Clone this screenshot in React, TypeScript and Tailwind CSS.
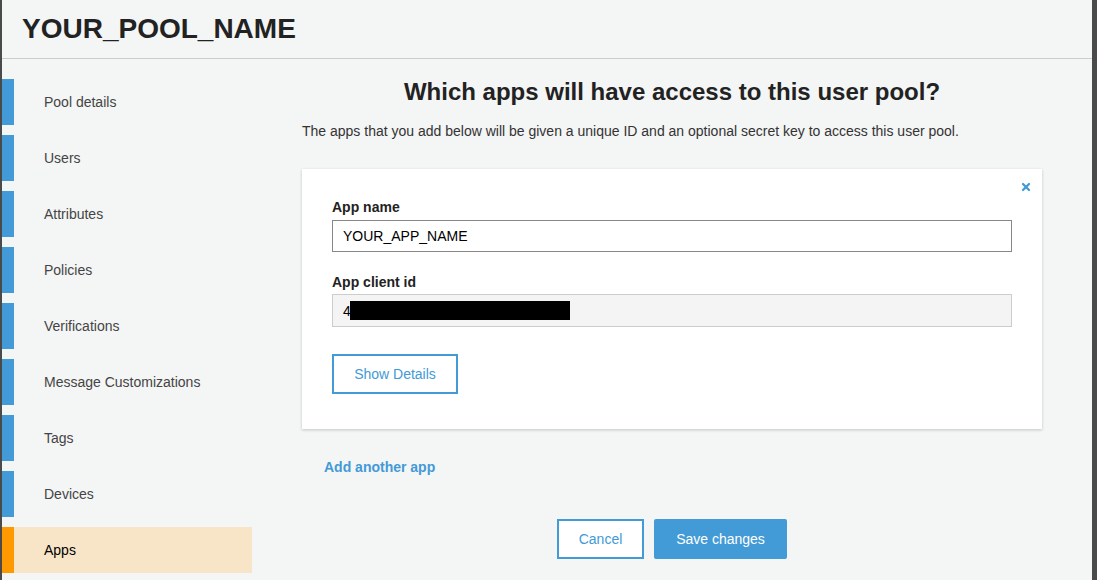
import { X } from "lucide-react";

const navItems = [
  "Pool details",
  "Users",
  "Attributes",
  "Policies",
  "Verifications",
  "Message Customizations",
  "Tags",
  "Devices",
  "Apps",
];

export default function App() {
  return (
    <div
      className="h-[580px] w-full overflow-hidden border-l-2 border-r-[5px] border-[#4a4a4a] bg-[#f4f5f5] text-[#333]"
      style={{ fontFamily: '"Liberation Sans", Arial, sans-serif' }}
    >
      <header className="flex h-[59px] items-center border-b border-[#cccccc] pl-5">
        <h1 className="text-[28px] font-bold text-[#222]">YOUR_POOL_NAME</h1>
      </header>

      <div className="flex">
        {/* side nav */}
        <nav className="flex w-[250px] shrink-0 flex-col gap-[10px] pt-5">
          {navItems.map((item) => {
            const active = item === "Apps";
            return (
              <div
                key={item}
                className={
                  active
                    ? "flex h-[46px] items-center border-l-[12px] border-[#ff9900] bg-[#f8e5c8] pl-[30px] text-sm text-black"
                    : "flex h-[46px] items-center border-l-[12px] border-[#429ad6] pl-[30px] text-sm text-[#444]"
                }
              >
                {item}
              </div>
            );
          })}
        </nav>

        {/* main */}
        <main className="flex-1 pl-[50px] pr-[50px]">
          <h2 className="mt-[15px] text-center text-[24px] leading-[36px] font-bold text-[#222]">
            Which apps will have access to this user pool?
          </h2>
          <p className="mt-[11px] text-sm text-[#333]">
            The apps that you add below will be given a unique ID and an optional secret key to access this user pool.
          </p>

          <div className="relative mt-[28px] bg-white px-[30px] pt-[28px] pb-[35px] shadow-[0_1px_3px_rgba(0,0,0,0.2)]">
            <button className="absolute right-[10px] top-[12px] text-[#429ad6]">
              <X size={12} strokeWidth={4.5} />
            </button>

            <label className="block text-sm font-bold text-[#222]">App name</label>
            <div className="mt-[3px] flex h-[32px] items-center border border-[#888] px-[10px] text-sm text-black">
              YOUR_APP_NAME
            </div>

            <label className="mt-[20px] block text-sm font-bold text-[#222]">App client id</label>
            <div className="mt-[2px] flex h-[33px] items-center border border-[#cccccc] bg-[#f4f4f4] px-[10px] text-sm text-black">
              4
              <span className="-ml-[1px] inline-block h-[19px] w-[220px] bg-black" />
            </div>

            <button className="mt-[27px] h-[40px] w-[126px] border-2 border-[#429ad6] bg-white text-sm text-[#429ad6]">
              Show Details
            </button>
          </div>

          <div className="mt-[28px] pl-[22px] text-sm font-bold text-[#429ad6]">Add another app</div>

          <div className="mt-[42px] flex justify-center gap-[10px]">
            <button className="h-[40px] w-[87px] border-2 border-[#429ad6] bg-white text-sm text-[#429ad6]">
              Cancel
            </button>
            <button className="h-[40px] w-[133px] rounded-[2px] bg-[#429ad6] text-sm text-white">
              Save changes
            </button>
          </div>
        </main>
      </div>
    </div>
  );
}
